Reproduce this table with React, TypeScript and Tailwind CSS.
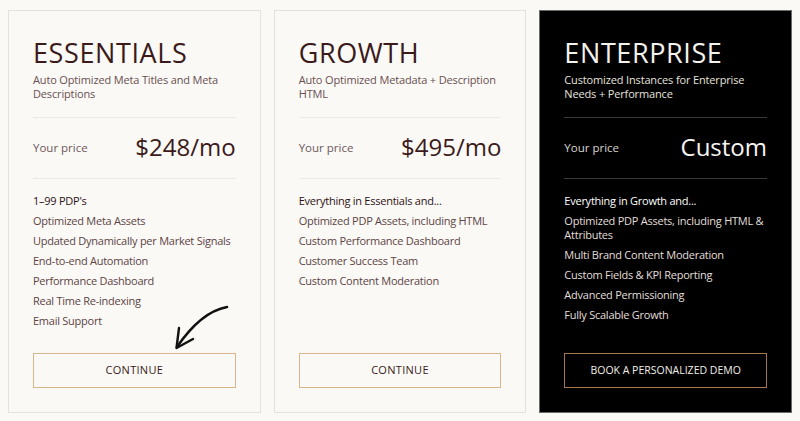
import React from 'react';

type Plan = {
  name: string;
  blurb: string;
  price: string;
  lead: string;
  features: string[];
  cta: string;
  dark?: boolean;
};

const plans: Plan[] = [
  {
    name: 'ESSENTIALS',
    blurb: 'Auto Optimized Meta Titles and Meta Descriptions',
    price: '$248/mo',
    lead: "1–99 PDP's",
    features: [
      'Optimized Meta Assets',
      'Updated Dynamically per Market Signals',
      'End-to-end Automation',
      'Performance Dashboard',
      'Real Time Re-indexing',
      'Email Support',
    ],
    cta: 'CONTINUE',
  },
  {
    name: 'GROWTH',
    blurb: 'Auto Optimized Metadata + Description HTML',
    price: '$495/mo',
    lead: 'Everything in Essentials and...',
    features: [
      'Optimized PDP Assets, including HTML',
      'Custom Performance Dashboard',
      'Customer Success Team',
      'Custom Content Moderation',
    ],
    cta: 'CONTINUE',
  },
  {
    name: 'ENTERPRISE',
    blurb: 'Customized Instances for Enterprise Needs + Performance',
    price: 'Custom',
    lead: 'Everything in Growth and...',
    features: [
      'Optimized PDP Assets, including HTML & Attributes',
      'Multi Brand Content Moderation',
      'Custom Fields & KPI Reporting',
      'Advanced Permissioning',
      'Fully Scalable Growth',
    ],
    cta: 'BOOK A PERSONALIZED DEMO',
    dark: true,
  },
];

function Arrow() {
  return (
    <svg
      className="absolute left-[161px] top-[290px] h-[62px] w-[70px]"
      viewBox="0 0 70 62"
      fill="none"
      stroke="#111"
      strokeLinecap="round"
      strokeLinejoin="round"
    >
      <path d="M57 6 C41 9 24 21 7 46" strokeWidth="2.6" />
      <path d="M9 27 L6.5 47 L23 38" strokeWidth="2.4" />
    </svg>
  );
}

function PlanCard({ plan, arrow }: { plan: Plan; arrow?: boolean }) {
  const dark = plan.dark;
  return (
    <div
      className={
        dark
          ? 'relative flex flex-1 flex-col border border-[#6b6b6b] bg-black px-[24px] pt-[28px] pb-[24px]'
          : 'relative flex flex-1 flex-col border-[1.5px] border-[#e4e2de] bg-[#faf9f6] px-[24px] pt-[28px] pb-[24px]'
      }
    >
      <h2
        className={
          'text-[27px] leading-none tracking-[0.6px] ' +
          (dark ? 'text-[#f4f2ee]' : 'text-[#3b1a1a]')
        }
      >
        {plan.name}
      </h2>
      <p
        className={
          'mt-[7px] text-[11px] leading-[14px] tracking-[-0.15px] ' +
          (dark ? 'text-[#e6e3de]' : 'text-[#6a5050]')
        }
      >
        {plan.blurb}
      </p>

      <div
        className={
          'mt-[16px] flex h-[62px] items-center justify-between border-y ' +
          (dark ? 'border-[#3a3a3a]' : 'border-[#ece9e4]')
        }
      >
        <span className={'text-[11.5px] ' + (dark ? 'text-[#d8d5d0]' : 'text-[#6e5858]')}>
          Your price
        </span>
        <span
          className={
            'pb-[3px] text-[24px] leading-none ' + (dark ? 'text-[#f7f5f2]' : 'text-[#3b1a1a]')
          }
        >
          {plan.price}
        </span>
      </div>

      <ul className="mt-[15px] flex flex-col gap-[6px] text-[11px] leading-[14px] tracking-[-0.25px]">
        <li className={dark ? 'text-white' : 'text-[#2e1212]'}>{plan.lead}</li>
        {plan.features.map((f) => (
          <li key={f} className={dark ? 'text-[#e2dfda]' : 'text-[#5e4444]'}>
            {f}
          </li>
        ))}
      </ul>

      <button
        className={
          'mt-auto flex h-[35px] w-full items-center justify-center border ' +
          (dark
            ? 'border-[#a2784c] text-[10.5px] text-[#f2efea]'
            : 'border-[#d9b58c] text-[11px] tracking-[0.3px] text-[#3b1a1a]')
        }
      >
        {plan.cta}
      </button>

      {arrow && <Arrow />}
    </div>
  );
}

export default function App() {
  return (
    <div
      className="flex h-[421px] w-[800px] gap-[13px] bg-[#faf9f6] px-[8px] pt-[10px] pb-[8px]"
      style={{ fontFamily: '"Open Sans", sans-serif' }}
    >
      {plans.map((p, i) => (
        <PlanCard key={p.name} plan={p} arrow={i === 0} />
      ))}
    </div>
  );
}
